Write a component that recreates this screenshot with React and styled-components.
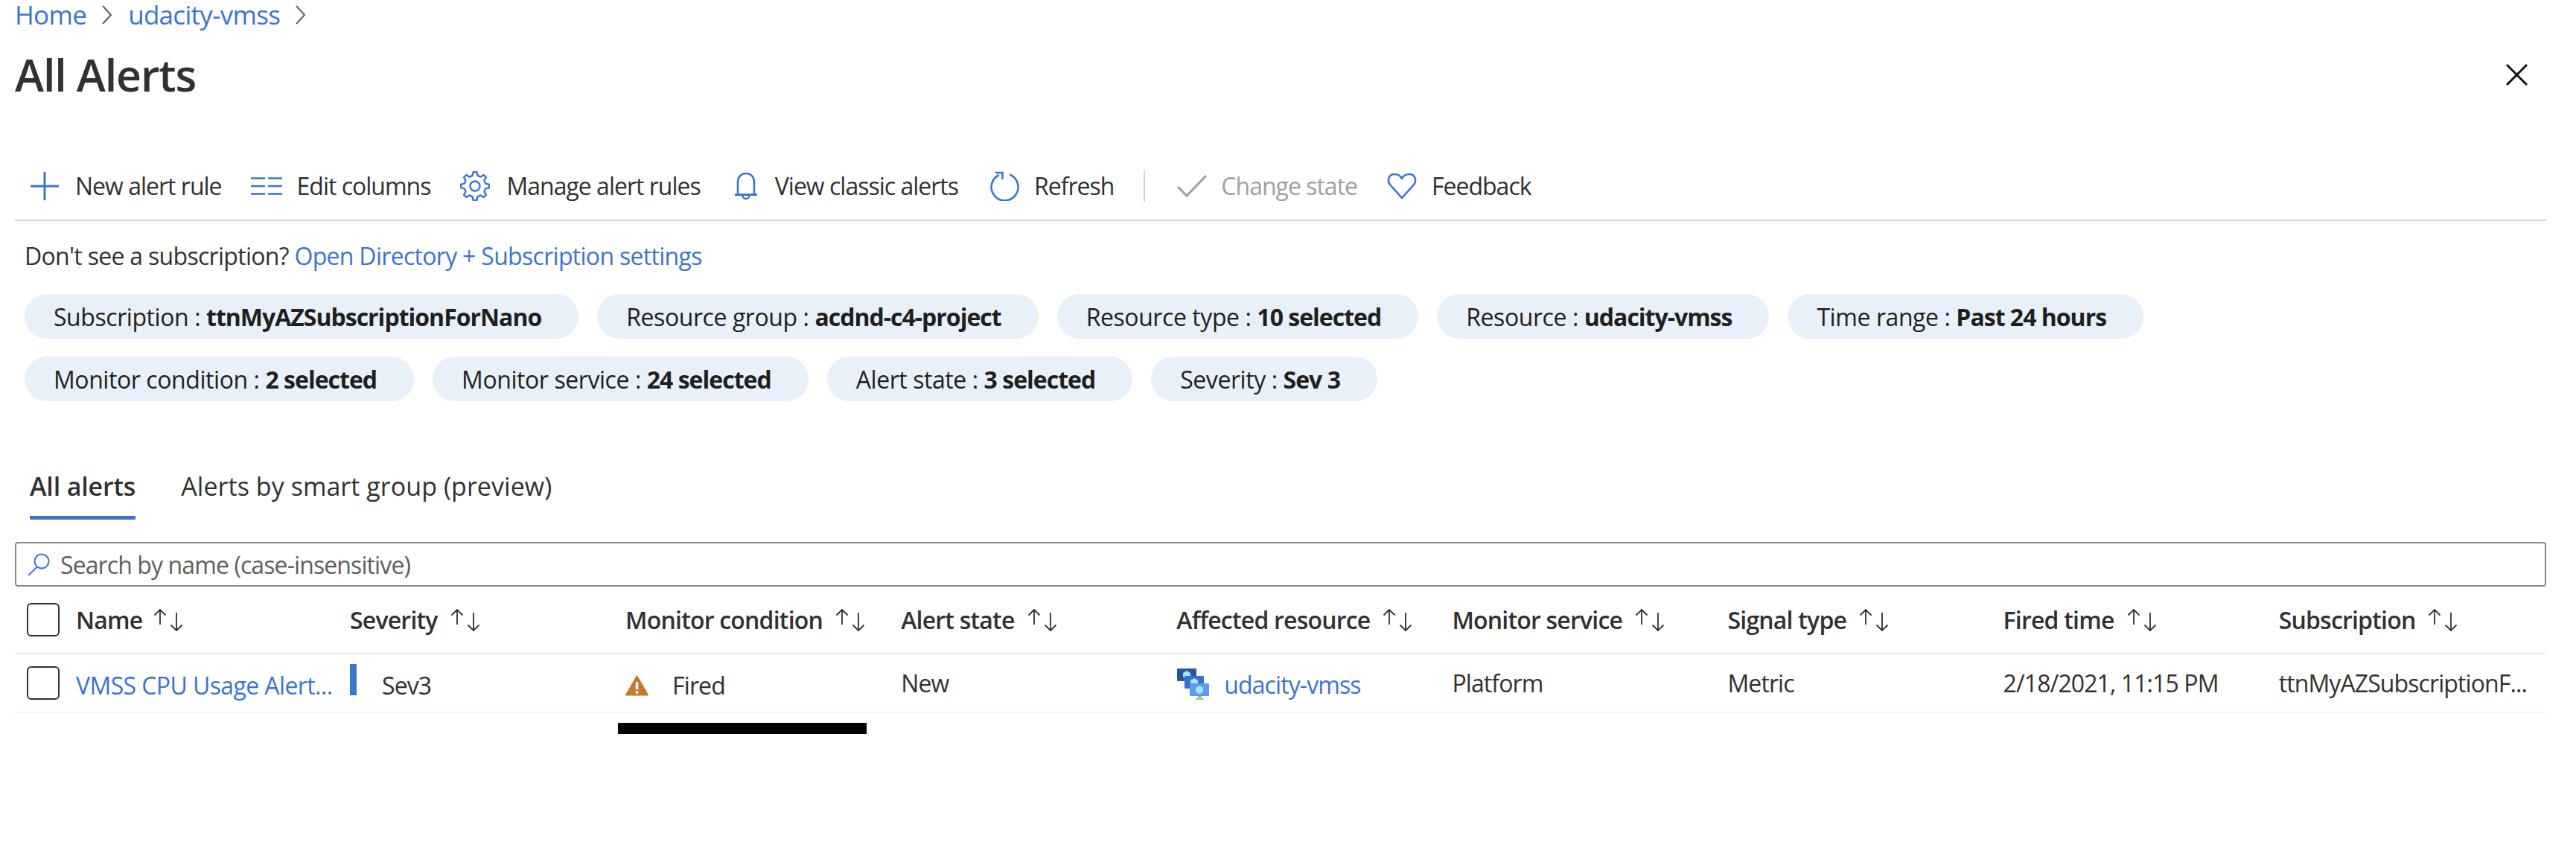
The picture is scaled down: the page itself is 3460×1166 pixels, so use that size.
import React from "react";
import styled, { createGlobalStyle } from "styled-components";

const LINK = "#3b74d1";
const TEXT = "#323130";

const Global = createGlobalStyle`
  html, body { margin: 0; padding: 0; background: #fff; }
  body { font-family: "Open Sans", "Noto Sans", sans-serif; color: ${TEXT}; }
  * { box-sizing: border-box; }
`;

const Page = styled.div`
  padding: 0 40px 0 20px;
  font-size: 32px;
  letter-spacing: -0.9px;
  width: 3460px;
  height: 1166px;
  overflow: hidden;
  background: #fff;
`;
const Breadcrumb = styled.nav`
  display: flex;
  align-items: center;
  height: 40px;
  line-height: 40px;
  font-size: 35px;
  letter-spacing: -0.7px;
  gap: 20px;
`;
const Crumb = styled.a`
  color: ${LINK};
  text-decoration: none;
`;
const TitleRow = styled.header`
  display: flex;
  justify-content: space-between;
  align-items: center;
  height: 80px;
  margin-top: 20px;
  padding-right: 25px;
`;
const Title = styled.h1`
  margin: 0;
  font-size: 59px;
  font-weight: 600;
  letter-spacing: -1.1px;
  color: #323130;
`;
const Toolbar = styled.div`
  display: flex;
  align-items: center;
  height: 69px;
  margin-top: 88px;
  padding: 0 0 24px 21px;
  border-bottom: 2px solid #d2d2d2;
  letter-spacing: -1px;
`;
const ToolButton = styled.span`
  display: flex;
  align-items: center;
  gap: ${(p) => p.$gap ?? 21}px;
  margin-right: ${(p) => p.$mr ?? 40}px;
  color: ${(p) => (p.$disabled ? "#a19f9d" : TEXT)};
  white-space: nowrap;
`;
const Separator = styled.span`
  width: 2px;
  height: 42px;
  background: #d2d2d2;
  margin-right: 43px;
`;
const Notice = styled.p`
  margin: 29px 0 0;
  padding-left: 13px;
  height: 36px;
  line-height: 36px;
  letter-spacing: -0.7px;
`;
const Link = styled.a`
  color: ${LINK};
  text-decoration: none;
`;
const ChipRow = styled.div`
  display: flex;
  gap: 25px;
  padding-left: 13px;
  margin-top: ${(p) => p.$mt}px;
`;
const Chip = styled.span`
  display: inline-flex;
  align-items: center;
  height: 60px;
  padding: 0 50px 0 39px;
  border-radius: 30px;
  background: #e8f0f9;
  color: #1f1f1f;
  white-space: pre;
  letter-spacing: -0.43px;
  b {
    font-weight: 700;
    letter-spacing: -1px;
  }
`;
const Tabs = styled.div`
  display: flex;
  gap: 61px;
  padding-left: 20px;
  margin-top: 86px;
`;
const Tab = styled.span`
  height: 73px;
  padding-top: 8px;
  line-height: 40px;
  font-size: 34px;
  letter-spacing: ${(p) => (p.$active ? "-0.15px" : "0.05px")};
  font-weight: ${(p) => (p.$active ? 600 : 400)};
  border-bottom: 5px solid ${(p) => (p.$active ? LINK : "transparent")};
`;
const Search = styled.div`
  display: flex;
  align-items: center;
  gap: 14px;
  height: 60px;
  margin-top: 30px;
  padding-left: 15px;
  border: 2px solid #8a8886;
  border-radius: 4px;
  color: #605e5c;
`;
const Table = styled.div`
  display: flex;
  flex-direction: column;
`;
const Row = styled.div`
  display: grid;
  grid-template-columns: 450px repeat(7, 370.1px) 1fr;
  height: ${(p) => p.$h}px;
  border-bottom: 2px solid ${(p) => p.$line};
`;
const Cell = styled.div`
  display: flex;
  align-items: center;
  padding-top: ${(p) => p.$pt ?? 0}px;
  white-space: nowrap;
  min-width: 0;
`;
const HeadCell = styled(Cell)`
  font-weight: 600;
  letter-spacing: -0.8px;
  gap: 17px;
`;
const NameCell = styled(Cell)`
  gap: 22px;
  padding-left: 16px;
`;
const NameHead = styled.span`
  display: flex;
  align-items: center;
  gap: 15px;
  font-weight: 600;
  letter-spacing: -0.8px;
`;
const NameLink = styled(Link)`
  letter-spacing: -0.6px;
  padding-top: 6px;
`;
const Checkbox = styled.span`
  flex: none;
  width: 44px;
  height: 45px;
  border: 2px solid #323130;
  border-radius: 6px;
  background: #fff;
`;
const SeverityBar = styled.span`
  width: 9px;
  height: 42px;
  background: ${LINK};
  margin-right: 34px;
  align-self: flex-start;
  margin-top: 7px;
`;
const IconText = styled.span`
  display: flex;
  align-items: center;
  gap: ${(p) => p.$gap}px;
`;
const Redaction = styled.div`
  width: 334px;
  height: 15px;
  margin: 13px 0 0 810px;
  background: #000;
`;

const Svg = ({ w, h, children }) => (
  <svg width={w} height={h} viewBox={`0 0 ${w} ${h}`} fill="none" style={{ flex: "none", display: "block" }}>
    {children}
  </svg>
);

const Chevron = () => (
  <Svg w={16} h={28}>
    <path d="M2 2l11 12L2 26" stroke="#605e5c" strokeWidth="2" />
  </Svg>
);
const Close = () => (
  <Svg w={29} h={29}>
    <path d="M1 1l27 27M28 1L1 28" stroke="#111" strokeWidth="3" />
  </Svg>
);
const Plus = () => (
  <Svg w={38} h={38}>
    <path d="M19 0v38M0 19h38" stroke={LINK} strokeWidth="3" />
  </Svg>
);
const Columns = () => (
  <Svg w={42} h={24}>
    <path d="M0 1.5h19M23 1.5h19M0 12h19M23 12h19M0 22.5h19M23 22.5h19" stroke={LINK} strokeWidth="2.6" />
  </Svg>
);
const gearPath = (() => {
  const cx = 20, cy = 20, outer = 19, inner = 14.5, teeth = 8;
  const pts = [];
  for (let i = 0; i < teeth; i++) {
    const a = (i / teeth) * Math.PI * 2;
    const st = (Math.PI * 2) / teeth;
    [[-0.3, inner], [-0.16, outer], [0.16, outer], [0.3, inner]].forEach(([k, r]) => {
      pts.push([cx + r * Math.cos(a + k * st), cy + r * Math.sin(a + k * st)]);
    });
  }
  return "M" + pts.map((p) => p.map((n) => n.toFixed(1)).join(" ")).join("L") + "Z";
})();
const Gear = () => (
  <Svg w={40} h={40}>
    <path d={gearPath} stroke={LINK} strokeWidth="2.4" strokeLinejoin="round" />
    <circle cx="20" cy="20" r="6.5" stroke={LINK} strokeWidth="2.4" />
  </Svg>
);
const Bell = () => (
  <Svg w={30} h={38}>
    <path d="M4 30V14C4 7 8 2 15 2s11 5 11 12v16" stroke={LINK} strokeWidth="2.6" />
    <path d="M0 30.5h30" stroke={LINK} strokeWidth="3" />
    <path d="M10.5 31.5a4.5 4.5 0 0 0 9 0" stroke={LINK} strokeWidth="2.6" />
  </Svg>
);
const Refresh = () => (
  <Svg w={40} h={40}>
    <path d="M26 4.5a18 18 0 1 1-14 .5" stroke={LINK} strokeWidth="2.6" />
    <path d="M7 2h9.5v9" stroke={LINK} strokeWidth="2.6" />
  </Svg>
);
const Check = () => (
  <Svg w={40} h={30}>
    <path d="M1 16l12 12L39 1" stroke="#a19f9d" strokeWidth="3" />
  </Svg>
);
const Heart = () => (
  <Svg w={40} h={36}>
    <path
      d="M20 34L4 16C0 11 2 2 10 2c4 0 8 2 10 6 2-4 6-6 10-6 8 0 10 9 6 14L20 34Z"
      stroke={LINK}
      strokeWidth="2.6"
      strokeLinejoin="round"
    />
  </Svg>
);
const SearchIcon = () => (
  <Svg w={30} h={30}>
    <circle cx="19" cy="11" r="9.5" stroke={LINK} strokeWidth="2" />
    <path d="M13 18.5L1 30" stroke={LINK} strokeWidth="2" />
  </Svg>
);
const Sort = () => (
  <Svg w={40} h={30}>
    <path d="M9 21V1M1.5 8.5L9 1l7.5 7.5" stroke="#323130" strokeWidth="1.8" />
    <path d="M31 5v24M23.5 21.5L31 29l7.5-7.5" stroke="#323130" strokeWidth="1.8" />
  </Svg>
);
const Warning = () => (
  <Svg w={31} h={28}>
    <path d="M15.5 1.5L1 26.5h29L15.5 1.5Z" fill="#c8792b" stroke="#c8792b" strokeWidth="2" strokeLinejoin="round" />
    <path d="M15.5 9v10" stroke="#fff" strokeWidth="3.5" />
    <circle cx="15.5" cy="23" r="2" fill="#fff" />
  </Svg>
);
const Monitor = ({ x, y, fill }) => (
  <g transform={`translate(${x} ${y})`}>
    <rect width="26" height="17" rx="1" fill={fill} />
    <path d="M13 3l5 3v5.5l-5 3-5-3V6l5-3Z" fill="#a5e3fb" />
  </g>
);
const Vmss = () => (
  <Svg w={44} h={44}>
    <path d="M29 36h5v4h3v2H26v-2h3z" fill="#b3b3b3" />
    <Monitor x={1} y={0} fill="#2a5699" />
    <Monitor x={11} y={10} fill="#3a72cb" />
    <Monitor x={18} y={20} fill="#5b9bf0" />
  </Svg>
);

const toolItems = [
  { icon: <Plus />, label: "New alert rule", gap: 22, mr: 39 },
  { icon: <Columns />, label: "Edit columns", gap: 20, mr: 40 },
  { icon: <Gear />, label: "Manage alert rules", gap: 22, mr: 46 },
  { icon: <Bell />, label: "View classic alerts", gap: 24, mr: 43 },
  { icon: <Refresh />, label: "Refresh", gap: 19, mr: 40 },
];
const chipsTop = [
  ["Subscription", "ttnMyAZSubscriptionForNano"],
  ["Resource group", "acdnd-c4-project"],
  ["Resource type", "10 selected"],
  ["Resource", "udacity-vmss"],
  ["Time range", "Past 24 hours"],
];
const chipsBottom = [
  ["Monitor condition", "2 selected"],
  ["Monitor service", "24 selected"],
  ["Alert state", "3 selected"],
  ["Severity", "Sev 3"],
];
const columns = ["Severity", "Monitor condition", "Alert state", "Affected resource", "Monitor service", "Signal type", "Fired time", "Subscription"];

export default function App() {
  return (
    <Page>
      <Global />
      <Breadcrumb>
        <Crumb>Home</Crumb>
        <Chevron />
        <Crumb>udacity-vmss</Crumb>
        <Chevron />
      </Breadcrumb>
      <TitleRow>
        <Title>All Alerts</Title>
        <Close />
      </TitleRow>
      <Toolbar>
        {toolItems.map((t) => (
          <ToolButton key={t.label} $gap={t.gap} $mr={t.mr}>
            {t.icon}
            {t.label}
          </ToolButton>
        ))}
        <Separator />
        <ToolButton $disabled $gap={19} $mr={40}>
          <Check />
          Change state
        </ToolButton>
        <ToolButton $gap={20}>
          <Heart />
          Feedback
        </ToolButton>
      </Toolbar>
      <Notice>
        Don't see a subscription? <Link>Open Directory + Subscription settings</Link>
      </Notice>
      <ChipRow $mt={33}>
        {chipsTop.map(([k, v]) => (
          <Chip key={k}>
            {k} : <b>{v}</b>
          </Chip>
        ))}
      </ChipRow>
      <ChipRow $mt={24}>
        {chipsBottom.map(([k, v]) => (
          <Chip key={k}>
            {k} : <b>{v}</b>
          </Chip>
        ))}
      </ChipRow>
      <Tabs>
        <Tab $active>All alerts</Tab>
        <Tab>Alerts by smart group (preview)</Tab>
      </Tabs>
      <Search>
        <SearchIcon />
        Search by name (case-insensitive)
      </Search>
      <Table>
        <Row $h={91} $line="#edebe9">
          <NameCell>
            <Checkbox />
            <NameHead>
              Name
              <Sort />
            </NameHead>
          </NameCell>
          {columns.map((c) => (
            <HeadCell key={c}>
              {c}
              <Sort />
            </HeadCell>
          ))}
        </Row>
        <Row $h={79} $line="#f3f2f1">
          <NameCell>
            <Checkbox />
            <NameLink>VMSS CPU Usage Alert...</NameLink>
          </NameCell>
          <Cell $pt={6}>
            <SeverityBar />
            Sev3
          </Cell>
          <Cell $pt={6}>
            <IconText $gap={32}>
              <Warning />
              Fired
            </IconText>
          </Cell>
          <Cell>New</Cell>
          <Cell $pt={4}>
            <IconText $gap={20}>
              <Vmss />
              <Link>udacity-vmss</Link>
            </IconText>
          </Cell>
          <Cell>Platform</Cell>
          <Cell>Metric</Cell>
          <Cell>2/18/2021, 11:15 PM</Cell>
          <Cell>ttnMyAZSubscriptionF...</Cell>
        </Row>
      </Table>
      <Redaction />
    </Page>
  );
}
